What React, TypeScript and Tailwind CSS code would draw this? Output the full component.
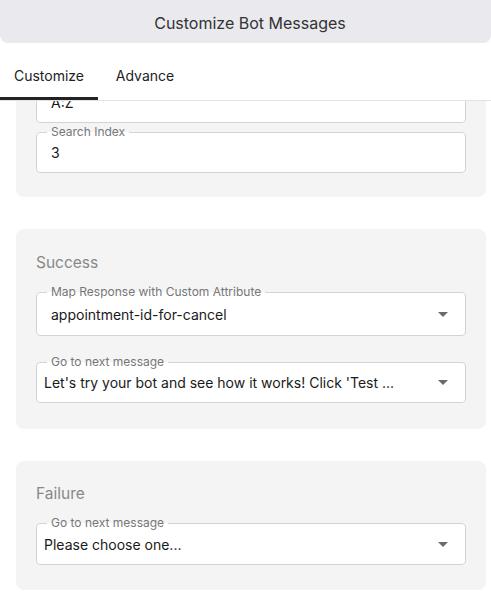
import { useState } from "react";

interface FieldProps {
	label: string
	value: string
	select?: boolean
	inner: number
	padX: string
};

function Field({ label, value, select, inner, padX }: FieldProps) {

	return (

		<fieldset className="rounded border border-[#d3d3d3] bg-white">

			<legend className="ml-[10px] px-1 text-[12px] leading-[12px] text-[#777]">
				{label}
			</legend>

			<div
				className={`flex items-center justify-between pb-[5px] ${padX}`}
				style={{ height: inner }}
			>

				<span className="truncate text-[14px] text-[#1a1a1a]">{value}</span>

				{select && (
					<svg width="10" height="5" viewBox="0 0 10 5" className="mr-[17px] shrink-0">
						<path d="M0 0 L10 0 L5 5 Z" fill="#6b6b6b" />
					</svg>
				)}

			</div>

		</fieldset>

	);
};

function Card({ title, children, className }: { title: string, children: React.ReactNode, className: string }) {

	return (

		<div className={`rounded-lg bg-[#f4f4f4] px-5 ${className}`}>

			<h3 className="text-[15.5px] leading-6 text-[#888]">{title}</h3>

			{children}

		</div>

	);
};

export default function App() {

	const [tab, setTab] = useState<"customize" | "advance">("customize");

	return (

		<div className="flex h-[602px] w-[491px] flex-col overflow-hidden bg-white font-['Inter',sans-serif]">

			<div className="flex h-[43px] shrink-0 items-center justify-center rounded-b-lg bg-[#e9e9ee] pt-[3px] pl-[9px]">
				<h1 className="text-[16px] text-[#333]">Customize Bot Messages</h1>
			</div>

			<div className="flex h-[58px] shrink-0 items-end border-b border-[#e3e3e3]">

				<button
					type="button"
					onClick={() => setTab("customize")}
					className={`flex h-[52px] w-[98px] items-center justify-center border-b-[3px] pt-[5px] text-[14px] text-[#222] ${tab === "customize" ? "border-[#222]" : "border-transparent"}`}
				>
					Customize
				</button>

				<button
					type="button"
					onClick={() => setTab("advance")}
					className={`flex h-[52px] w-[94px] items-center justify-center border-b-[3px] pt-[5px] text-[14px] text-[#222] ${tab === "advance" ? "border-[#222]" : "border-transparent"}`}
				>
					Advance
				</button>

			</div>

			<div className="min-h-0 flex-1 overflow-hidden">

				<div className="mt-[-132px] flex flex-col gap-8 pl-4 pr-[5px]">

					<Card title="Request" className="pt-[22px] pb-6">

						<div className="mt-[11px] flex flex-col gap-[3px]">
							<Field label="Spreadsheet ID" value="1xQ7-bot-appointments" inner={34} padX="px-[14px]" />
							<Field label="Range" value="A:Z" inner={34} padX="px-[14px]" />
							<Field label="Search Index" value="3" inner={34} padX="px-[14px]" />
						</div>

					</Card>

					<Card title="Success" className="pt-[22px] pb-[26px]">

						<div className="mt-[11px] flex flex-col gap-5">
							<Field label="Map Response with Custom Attribute" value="appointment-id-for-cancel" select inner={37} padX="pl-[14px]" />
							<Field label="Go to next message" value="Let's try your bot and see how it works! Click 'Test ..." select inner={34} padX="pl-[7px]" />
						</div>

					</Card>

					<Card title="Failure" className="pt-[21px] pb-[25px]">

						<div className="mt-[11px]">
							<Field label="Go to next message" value="Please choose one..." select inner={35} padX="pl-[7px]" />
						</div>

					</Card>

				</div>

			</div>

		</div>

	);
};
